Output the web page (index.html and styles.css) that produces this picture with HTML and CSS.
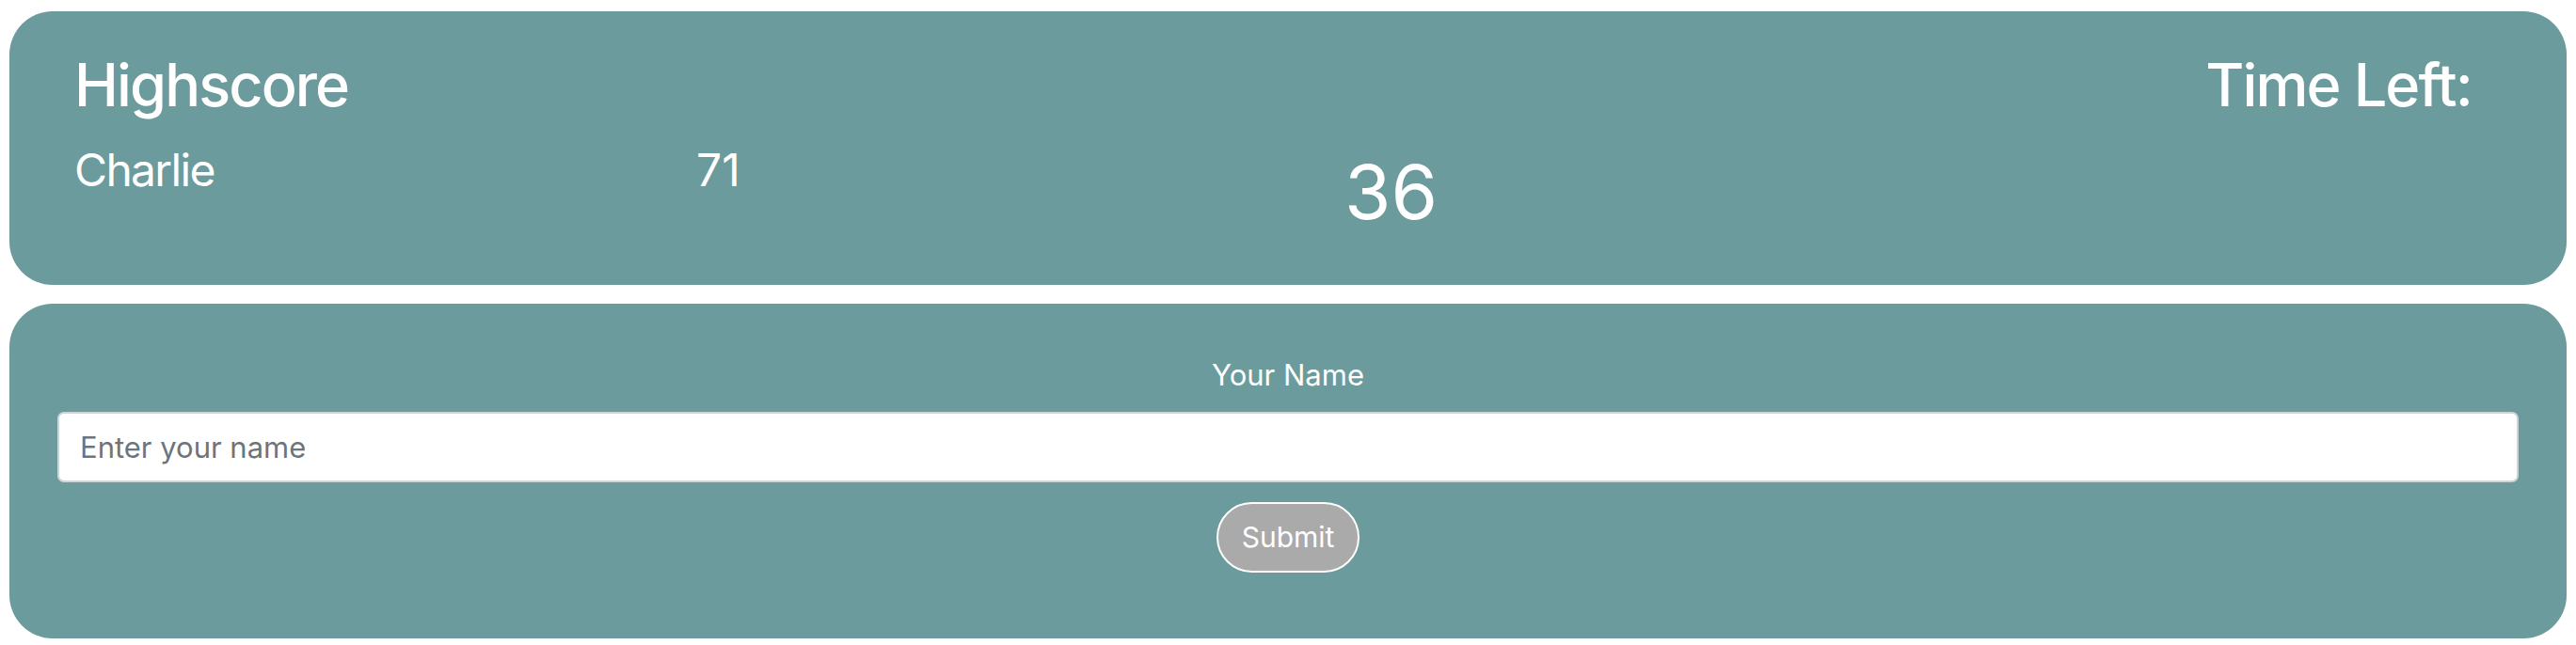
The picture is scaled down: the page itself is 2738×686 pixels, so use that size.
FILE: index.html
```html
<!DOCTYPE html>
<html lang="en">
<head>
<meta charset="utf-8">
<title>Highscore</title>
<link rel="stylesheet" href="styles.css">
</head>
<body>
  <main class="page">
    <section class="card scoreboard">
      <h1 class="board-title">Highscore</h1>
      <h1 class="timer-label">Time Left:</h1>
      <div class="player-name">Charlie</div>
      <div class="player-score">71</div>
      <div class="timer-value">36</div>
    </section>
    <section class="card name-form">
      <label class="form-label" for="name">Your Name</label>
      <input class="form-input" id="name" type="text" placeholder="Enter your name">
      <button class="submit-btn" type="button">Submit</button>
    </section>
  </main>
</body>
</html>
```

FILE: styles.css
```css
* {
  box-sizing: border-box;
}

html, body {
  margin: 0;
  padding: 0;
  background: #ffffff;
}

body {
  font-family: Inter, "Noto Sans", "Liberation Sans", sans-serif;
  color: #ffffff;
}

.page {
  display: flex;
  flex-direction: column;
  gap: 20px;
  padding: 12px 10px 0 10px;
}

.card {
  background: #6b9b9c;
  border-radius: 46px;
}

.scoreboard {
  display: grid;
  grid-template-columns: 661px 689px 1fr auto;
  grid-template-rows: auto auto;
  padding: 41px 101px 51px 69px;
}

.board-title {
  grid-column: 1 / 3;
  grid-row: 1;
  margin: 0 0 23px 0;
  font-size: 63px;
  font-weight: 500;
  line-height: 1.2;
  letter-spacing: -0.03em;
}

.timer-label {
  grid-column: 4;
  grid-row: 1;
  margin: 0;
  font-size: 63px;
  font-weight: 500;
  line-height: 1.2;
  letter-spacing: -0.03em;
  text-align: right;
}

.player-name,
.player-score {
  grid-row: 2;
  font-size: 48px;
  line-height: 1.2;
}

.player-name {
  grid-column: 1;
  letter-spacing: -0.035em;
}

.player-score {
  grid-column: 2;
}

.timer-value {
  grid-column: 3;
  grid-row: 2;
  margin-top: 4px;
  font-size: 80px;
  line-height: 1.2;
}

.name-form {
  display: flex;
  flex-direction: column;
  align-items: center;
  gap: 21px;
  padding: 57px 51px 70px 51px;
}

.form-label {
  font-size: 31px;
  line-height: 1.2;
}

.form-input {
  width: 100%;
  height: 75px;
  padding: 0 22px;
  border: 2px solid #ced4da;
  border-radius: 7px;
  background: #ffffff;
  font-family: inherit;
  font-size: 31px;
  color: #212529;
}

.form-input::placeholder {
  color: #6c757d;
}

.submit-btn {
  height: 75px;
  padding: 0 25px;
  border: 2px solid #ffffff;
  border-radius: 999px;
  background: #aaaaaa;
  color: #ffffff;
  font-family: inherit;
  font-size: 30px;
}
```
